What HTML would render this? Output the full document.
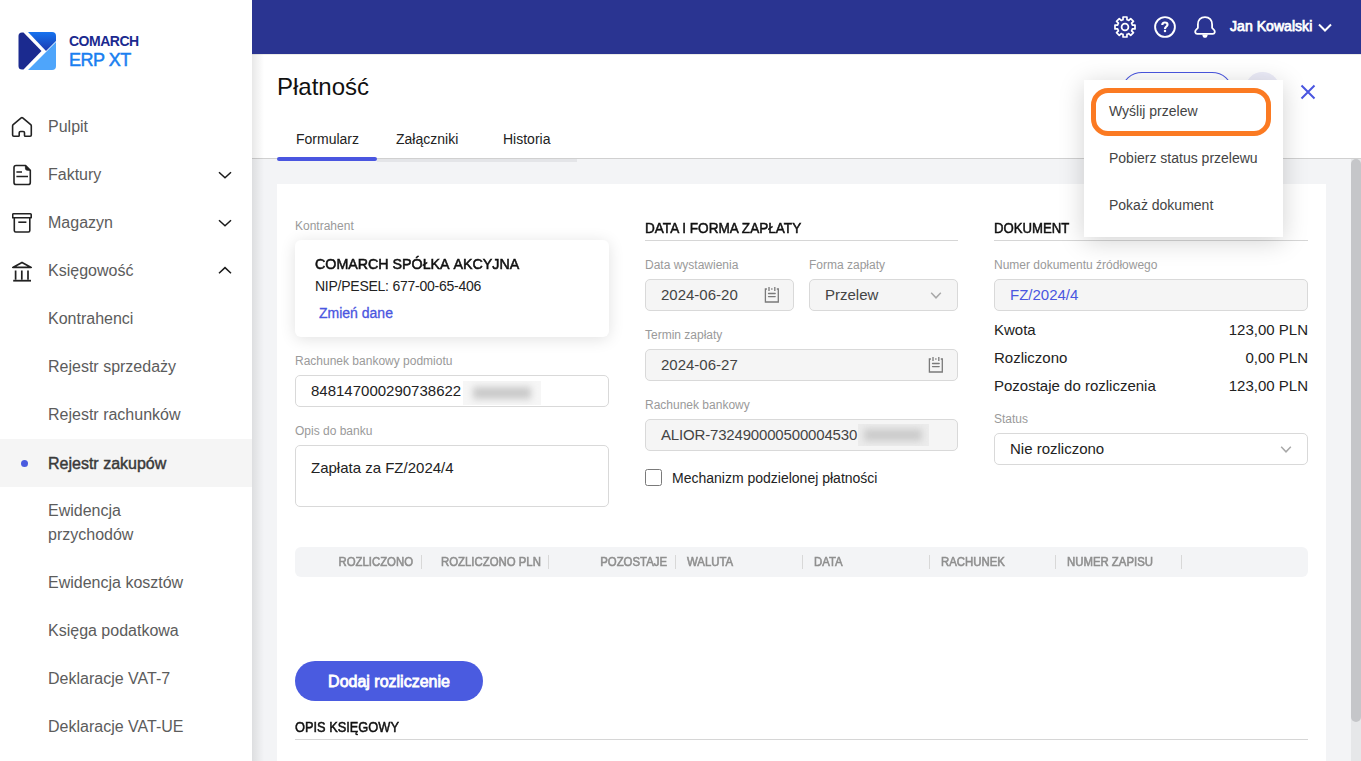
<!DOCTYPE html>
<html><head><meta charset="utf-8">
<style>
*{box-sizing:border-box;margin:0;padding:0}
html,body{width:1361px;height:761px;overflow:hidden;background:#fff;font-family:"Liberation Sans",sans-serif}
.abs{position:absolute}
#side{position:absolute;left:0;top:0;width:252px;height:761px;background:#fff;z-index:3}
#shadow{position:absolute;left:252px;top:54px;width:12px;height:707px;background:linear-gradient(to right,rgba(0,0,0,0.09),rgba(0,0,0,0));z-index:2}
#hdr{position:absolute;left:252px;top:0;width:1109px;height:54px;background:#2a3491;z-index:2}
.nav{position:absolute;left:0;width:252px;height:48px;font-size:16px;color:#5c5c5c;line-height:48px}
.nav .t{position:absolute;left:48px;top:1px}
.nav svg{position:absolute}
#top{position:absolute;left:252px;top:54px;width:1109px;height:104px;background:#fff}
#gray{position:absolute;left:252px;top:158px;width:1109px;height:603px;background:#f3f4f6;border-top:1px solid #d0d0d0}
#card{position:absolute;left:277px;top:184px;width:1049px;height:600px;background:#fff}
.lbl{position:absolute;font-size:12px;color:#9a9a9a;white-space:nowrap;margin-top:1px}
.inp{position:absolute;border:1px solid #d9d9d9;border-radius:5px;height:32px;background:#fff;font-size:15px;color:#222;line-height:30px;padding-left:15px;white-space:nowrap}
.inp.dis{background:#f5f5f5;color:#444}
.sec{position:absolute;font-size:14px;color:#111;white-space:nowrap;-webkit-text-stroke:0.5px #111;transform-origin:left top}
.secline{position:absolute;height:1px;background:#d6d6d6}
.row{position:absolute;font-size:15px;color:#222;white-space:nowrap}
.th{position:absolute;font-size:12.5px;color:#8f8f8f;top:555px;margin-left:1px;white-space:nowrap;line-height:14px;-webkit-text-stroke:0.6px #8f8f8f;transform:scaleX(0.91);transform-origin:left top}
.th.r{transform-origin:right top}
.sep{position:absolute;top:555px;width:1px;height:14px;background:#d8d8d8}
#menu{position:absolute;left:1084px;top:80px;width:199px;height:157px;background:#fff;box-shadow:0 4px 24px rgba(0,0,0,0.18);z-index:5}
.mi{position:absolute;left:25px;font-size:14px;color:#444;white-space:nowrap}
</style></head>
<body>
<div id="side">
  <!-- logo -->
  <svg class="abs" style="left:18px;top:32px" width="38" height="38" viewBox="0 0 38 38">
    <defs><linearGradient id="lg1" x1="0" y1="0" x2="0" y2="1"><stop offset="0" stop-color="#1673ef"/><stop offset="1" stop-color="#1a3ab0"/></linearGradient></defs>
    <path d="M4 0.5 Q0.5 0.5 0.5 4 L0.5 34 Q0.5 37.5 4 37.5 L5.5 37.5 L23.5 19 L5.5 0.5 Z" fill="#1b2a8f"/>
    <path d="M10 0 L34 0 Q38 0 38 4 L38 9 L28 19 Z" fill="url(#lg1)"/>
    <path d="M28.5 19.5 L38 10 L38 34 Q38 38 34 38 L10 38 Z" fill="#4ea5fb"/>
  </svg>
  <div class="abs" style="left:69px;top:33px;font-size:14px;font-weight:bold;color:#1b2a8f;letter-spacing:-0.5px">COMARCH</div>
  <div class="abs" style="left:69px;top:50px;font-size:18px;color:#1a7ff0;letter-spacing:-0.5px;-webkit-text-stroke:0.5px #1a7ff0">ERP XT</div>

  <div class="nav" style="top:102px"><svg style="left:11px;top:14px" width="22" height="22" viewBox="0 0 22 22"><path d="M1.6 10 Q1.6 9.2 2.2 8.7 L10.2 1.9 Q10.95 1.3 11.7 1.9 L19.7 8.7 Q20.3 9.2 20.3 10 V19 Q20.3 20.2 19.1 20.2 H14.3 Q13.5 20.2 13.5 19.4 V16.8 Q13.5 15.5 12.2 15.5 H9.5 Q8.2 15.5 8.2 16.8 V19.4 Q8.2 20.2 7.4 20.2 H2.8 Q1.6 20.2 1.6 19 Z" fill="none" stroke="#222" stroke-width="1.6" stroke-linejoin="round"/></svg><span class="t">Pulpit</span></div>
  <div class="nav" style="top:150px"><svg style="left:12px;top:14px" width="22" height="23" viewBox="0 0 22 23"><path d="M2 3.6 Q2 1.5 4.1 1.5 H13.6 L18.3 6.2 V18.4 Q18.3 20.5 16.2 20.5 H4.1 Q2 20.5 2 18.4 Z" fill="none" stroke="#222" stroke-width="1.6" stroke-linejoin="round"/><path d="M13.4 1.6 V4.3 Q13.4 6.3 15.4 6.3 H18.2 Z" fill="#222" stroke="#222" stroke-width="0.8" stroke-linejoin="round"/><path d="M4.4 8.1 H10 M4.4 12.4 H16" stroke="#222" stroke-width="1.5"/></svg><span class="t">Faktury</span><svg style="left:218px;top:20px" width="14" height="9" viewBox="0 0 14 9"><path d="M1 2.2 L7 7.8 L13 2.2" fill="none" stroke="#1a1a1a" stroke-width="1.5"/></svg></div>
  <div class="nav" style="top:198px"><svg style="left:12px;top:13px" width="22" height="23" viewBox="0 0 22 23"><path d="M0.7 3.6 Q0.7 2.8 1.5 2.8 H18.4 Q19.2 2.8 19.2 3.6 V6.8 H0.7 Z" fill="none" stroke="#222" stroke-width="1.6" stroke-linejoin="round"/><path d="M2.3 6.8 V19.6 Q2.3 21 3.7 21 H16.4 Q17.8 21 17.8 19.6 V6.8" fill="none" stroke="#222" stroke-width="1.6" stroke-linejoin="round"/><path d="M6.3 11.2 H14.4" stroke="#222" stroke-width="1.6"/></svg><span class="t">Magazyn</span><svg style="left:218px;top:20px" width="14" height="9" viewBox="0 0 14 9"><path d="M1 2.2 L7 7.8 L13 2.2" fill="none" stroke="#1a1a1a" stroke-width="1.5"/></svg></div>
  <div class="nav" style="top:246px"><svg style="left:12px;top:13px" width="22" height="23" viewBox="0 0 22 23"><path d="M10 3.4 L19.2 8.4 H0.8 Z" fill="none" stroke="#222" stroke-width="1.7" stroke-linejoin="round"/><path d="M3.6 11.5 V20.8 M9.8 11.5 V20.8 M16 11.5 V20.8" stroke="#222" stroke-width="1.7"/><path d="M1.2 21.7 H19" stroke="#222" stroke-width="1.8"/></svg><span class="t">Księgowość</span><svg style="left:218px;top:20px" width="14" height="9" viewBox="0 0 14 9"><path d="M1 7.2 L7 1.6 L13 7.2" fill="none" stroke="#1a1a1a" stroke-width="1.5"/></svg></div>
  <div class="nav" style="top:294px"><span class="t">Kontrahenci</span></div>
  <div class="nav" style="top:342px"><span class="t">Rejestr sprzedaży</span></div>
  <div class="nav" style="top:390px"><span class="t">Rejestr rachunków</span></div>
  <div class="nav" style="top:439px;background:#f5f5f5;color:#3a3a3a;-webkit-text-stroke:0.45px #3a3a3a"><span class="abs" style="left:21px;top:21px;width:7px;height:7px;border-radius:50%;background:#4a5bdf"></span><span class="t">Rejestr zakupów</span></div>
  <div class="nav" style="top:487px;line-height:24px;height:72px"><span class="t" style="top:12px">Ewidencja<br>przychodów</span></div>
  <div class="nav" style="top:558px"><span class="t">Ewidencja kosztów</span></div>
  <div class="nav" style="top:606px"><span class="t">Księga podatkowa</span></div>
  <div class="nav" style="top:654px"><span class="t">Deklaracje VAT-7</span></div>
  <div class="nav" style="top:702px"><span class="t">Deklaracje VAT-UE</span></div>
</div>
<div id="shadow"></div>
<div id="hdr"></div>
<div id="top"></div>
<div class="abs" style="left:252px;top:54px;width:1109px;height:1px;background:#ebebe8"></div>
<div id="gray"></div>
<div id="card"></div>

<!-- header icons -->
<svg class="abs" style="left:1113px;top:15px;z-index:3" width="24" height="24" viewBox="0 0 24 24"><path d="M9.09 4.98 L10.03 4.66 L10.05 1.99 L13.95 1.99 L13.97 4.66 L14.91 4.98 L15.80 5.42 L17.70 3.54 L20.46 6.30 L18.58 8.20 L19.02 9.09 L19.34 10.03 L22.01 10.05 L22.01 13.95 L19.34 13.97 L19.02 14.91 L18.58 15.80 L20.46 17.70 L17.70 20.46 L15.80 18.58 L14.91 19.02 L13.97 19.34 L13.95 22.01 L10.05 22.01 L10.03 19.34 L9.09 19.02 L8.20 18.58 L6.30 20.46 L3.54 17.70 L5.42 15.80 L4.98 14.91 L4.66 13.97 L1.99 13.95 L1.99 10.05 L4.66 10.03 L4.98 9.09 L5.42 8.20 L3.54 6.30 L6.30 3.54 L8.20 5.42 Z" fill="none" stroke="#fff" stroke-width="1.7" stroke-linejoin="round"/><circle cx="12" cy="12" r="3.4" fill="none" stroke="#fff" stroke-width="1.8"/></svg>
<svg class="abs" style="left:1154px;top:16px;z-index:3" width="22" height="22" viewBox="0 0 22 22"><circle cx="11" cy="11" r="9.9" fill="none" stroke="#fff" stroke-width="1.9"/><path d="M8.3 8.9 C8.3 7.2 9.5 6.5 10.9 6.5 C12.4 6.5 13.5 7.3 13.5 8.7 C13.5 10.5 11 10.6 11 12.9" fill="none" stroke="#fff" stroke-width="2.2"/><circle cx="11" cy="15.0" r="1.25" fill="#fff"/></svg>
<svg class="abs" style="left:1194px;top:16px;z-index:3" width="22" height="22" viewBox="0 0 22 22"><path d="M11 1.1 C6.5 1.1 3.9 4.3 3.9 8.5 V11.8 L1.9 14 C0.7 15.3 1.2 17.9 3.1 17.9 H18.9 C20.8 17.9 21.3 15.3 20.1 14 L18.1 11.8 V8.5 C18.1 4.3 15.5 1.1 11 1.1 Z" fill="none" stroke="#fff" stroke-width="1.8" stroke-linejoin="round"/><path d="M8.3 18.4 H13.7 C13.7 20.3 12.5 21.8 11 21.8 C9.5 21.8 8.3 20.3 8.3 18.4 Z" fill="#fff"/></svg>
<div class="abs" style="left:1230px;top:18px;font-size:14px;color:#fff;z-index:3;white-space:nowrap;letter-spacing:0.05px;-webkit-text-stroke:0.75px #fff">Jan Kowalski</div>
<svg class="abs" style="left:1318px;top:23px;z-index:3" width="14" height="9" viewBox="0 0 14 9"><path d="M1 1.5 L7 7.5 L13 1.5" fill="none" stroke="#fff" stroke-width="2"/></svg>

<!-- top section -->
<div class="abs" style="left:277px;top:73px;font-size:24px;color:#111;white-space:nowrap">Płatność</div>
<div class="abs" style="left:296px;top:131px;font-size:14px;color:#222">Formularz</div>
<div class="abs" style="left:396px;top:131px;font-size:14px;color:#222">Załączniki</div>
<div class="abs" style="left:503px;top:131px;font-size:14px;color:#222">Historia</div>
<div class="abs" style="left:377px;top:159px;width:200px;height:3px;background:#e4e5e8;z-index:1"></div>
<div class="abs" style="left:277px;top:157px;width:100px;height:4px;background:#4a56e0;border-radius:2px;z-index:1"></div>
<div class="abs" style="left:1122px;top:72px;width:110px;height:40px;border:1px solid #4a56e0;border-radius:20px / 18px;background:#fff"></div>
<div class="abs" style="left:1245px;top:72px;width:35px;height:35px;border-radius:50%;background:#ececf8"></div>
<svg class="abs" style="left:1300px;top:84px" width="16" height="16" viewBox="0 0 16 16"><path d="M1.5 1.5 L14.5 14.5 M14.5 1.5 L1.5 14.5" stroke="#4a56e0" stroke-width="2"/></svg>

<!-- column 1 -->
<div class="lbl" style="left:295px;top:218px">Kontrahent</div>
<div class="abs" style="left:295px;top:240px;width:314px;height:97px;background:#fff;border-radius:6px;box-shadow:0 2px 16px rgba(0,0,0,0.12)"></div>
<div class="abs" style="left:315px;top:255px;font-size:15px;color:#111;white-space:nowrap;-webkit-text-stroke:0.55px #111;font-kerning:none;transform:scaleX(0.95);transform-origin:left top">COMARCH SPÓŁKA AKCYJNA</div>
<div class="abs" style="left:315px;top:278px;font-size:14px;color:#222;white-space:nowrap;letter-spacing:-0.25px">NIP/PESEL: 677-00-65-406</div>
<div class="abs" style="left:319px;top:305px;font-size:14px;color:#4a56e0;white-space:nowrap;-webkit-text-stroke:0.3px #4a56e0">Zmień dane</div>
<div class="lbl" style="left:295px;top:353px">Rachunek bankowy podmiotu</div>
<div class="inp" style="left:295px;top:375px;width:314px">848147000290738622</div>
<div class="abs" style="left:463px;top:381px;width:78px;height:24px;background:#f6f6f6;overflow:hidden"><div class="abs" style="left:10px;top:6px;width:58px;height:12px;background:#c9c9c9;filter:blur(3.5px)"></div></div>
<div class="lbl" style="left:295px;top:423px">Opis do banku</div>
<div class="inp" style="left:295px;top:445px;width:314px;height:62px;line-height:44px">Zapłata za FZ/2024/4</div>

<!-- column 2 -->
<div class="sec" style="left:645px;top:220px;transform:scaleX(0.97)">DATA I FORMA ZAPŁATY</div>
<div class="secline" style="left:645px;top:240px;width:313px"></div>
<div class="lbl" style="left:645px;top:257px">Data wystawienia</div>
<div class="lbl" style="left:809px;top:257px">Forma zapłaty</div>
<div class="inp dis" style="left:645px;top:279px;width:149px">2024-06-20</div>
<div class="inp dis" style="left:809px;top:279px;width:149px">Przelew</div>
<div class="lbl" style="left:645px;top:327px">Termin zapłaty</div>
<div class="inp dis" style="left:645px;top:349px;width:313px">2024-06-27</div>
<div class="lbl" style="left:645px;top:397px">Rachunek bankowy</div>
<div class="inp dis" style="left:645px;top:419px;width:313px"><span style="letter-spacing:-0.17px">ALIOR-732490000500004530</span></div>
<div class="abs" style="left:858px;top:424px;width:71px;height:22px;background:#ececec;overflow:hidden"><div class="abs" style="left:6px;top:5px;width:58px;height:12px;background:#cbcbcb;filter:blur(3.5px)"></div></div>
<div class="abs" style="left:645px;top:469px;width:17px;height:17px;border:1.5px solid #7a7a7a;border-radius:2.5px;background:#fff"></div>
<div class="abs" style="left:672px;top:470px;font-size:14px;color:#222;white-space:nowrap">Mechanizm podzielonej płatności</div>

<svg class="abs" style="left:764px;top:286px" width="15" height="17" viewBox="0 0 15 17"><path d="M2.9 3 H1.4 V16 H14.3 V3 H12.8 M7.2 3 H8.5" stroke="#7a7a7a" fill="none" stroke-width="1.3"/><path d="M5 1 V5 M10.8 1 V5" stroke="#7a7a7a" stroke-width="1.3"/><path d="M4.5 7.5 H11.2 M4.5 10.6 H11.2" stroke="#7a7a7a" stroke-width="1.3" stroke-linecap="round"/></svg>
<svg class="abs" style="left:930px;top:291px" width="13" height="9" viewBox="0 0 13 9"><path d="M1.2 1.8 L6 6.8 L10.8 1.8" stroke="#a8a8a8" fill="none" stroke-width="1.5"/></svg>
<svg class="abs" style="left:928px;top:356px" width="15" height="17" viewBox="0 0 15 17"><path d="M2.9 3 H1.4 V16 H14.3 V3 H12.8 M7.2 3 H8.5" stroke="#7a7a7a" fill="none" stroke-width="1.3"/><path d="M5 1 V5 M10.8 1 V5" stroke="#7a7a7a" stroke-width="1.3"/><path d="M4.5 7.5 H11.2 M4.5 10.6 H11.2" stroke="#7a7a7a" stroke-width="1.3" stroke-linecap="round"/></svg>
<!-- column 3 -->
<div class="sec" style="left:994px;top:220px;transform:scaleX(0.94)">DOKUMENT</div>
<div class="secline" style="left:994px;top:240px;width:314px"></div>
<div class="lbl" style="left:994px;top:257px">Numer dokumentu źródłowego</div>
<div class="inp dis" style="left:994px;top:279px;width:314px;color:#4a56e0">FZ/2024/4</div>
<div class="row" style="left:994px;top:321px">Kwota</div>
<div class="row" style="left:1158px;top:321px;width:150px;text-align:right">123,00 PLN</div>
<div class="row" style="left:994px;top:349px">Rozliczono</div>
<div class="row" style="left:1158px;top:349px;width:150px;text-align:right">0,00 PLN</div>
<div class="row" style="left:994px;top:377px">Pozostaje do rozliczenia</div>
<div class="row" style="left:1158px;top:377px;width:150px;text-align:right">123,00 PLN</div>
<div class="lbl" style="left:994px;top:411px">Status</div>
<div class="inp" style="left:994px;top:433px;width:314px">Nie rozliczono</div>
<svg class="abs" style="left:1280px;top:445px" width="13" height="9" viewBox="0 0 13 9"><path d="M1.2 1.8 L6 6.8 L10.8 1.8" stroke="#a8a8a8" fill="none" stroke-width="1.5"/></svg>

<!-- table header -->
<div class="abs" style="left:295px;top:547px;width:1013px;height:30px;background:#f3f4f6;border-radius:6px"></div>
<div class="th r" style="left:300px;width:112px;text-align:right">ROZLICZONO</div>
<div class="sep" style="left:421px"></div>
<div class="th" style="left:440px">ROZLICZONO PLN</div>
<div class="sep" style="left:548px"></div>
<div class="th r" style="left:556px;width:110px;text-align:right">POZOSTAJE</div>
<div class="sep" style="left:675px"></div>
<div class="th" style="left:686px">WALUTA</div>
<div class="sep" style="left:802px"></div>
<div class="th" style="left:813px">DATA</div>
<div class="sep" style="left:929px"></div>
<div class="th" style="left:940px">RACHUNEK</div>
<div class="sep" style="left:1055px"></div>
<div class="th" style="left:1066px">NUMER ZAPISU</div>
<div class="sep" style="left:1181px"></div>

<div class="abs" style="left:295px;top:661px;width:188px;height:40px;border-radius:20px;background:#4a5be0;color:#fff;font-size:16px;text-align:center;line-height:42px;-webkit-text-stroke:0.8px #fff">Dodaj rozliczenie</div>
<div class="sec" style="left:295px;top:719px;transform:scaleX(0.915)">OPIS KSIĘGOWY</div>
<div class="secline" style="left:295px;top:739px;width:1013px"></div>

<!-- scrollbar -->
<div class="abs" style="left:1351px;top:159px;width:10px;height:602px;background:#e6e7e9"></div>
<div class="abs" style="left:1351px;top:159px;width:10px;height:563px;background:#c5c6c9;border-radius:5px"></div>

<!-- menu -->
<div id="menu">
  <div class="abs" style="left:7px;top:8px;width:180px;height:48px;border:5px solid #fb7a22;border-radius:17px"></div>
  <div class="mi" style="top:23px">Wyślij przelew</div>
  <div class="mi" style="top:70px">Pobierz status przelewu</div>
  <div class="mi" style="top:117px">Pokaż dokument</div>
</div>
</body></html>
